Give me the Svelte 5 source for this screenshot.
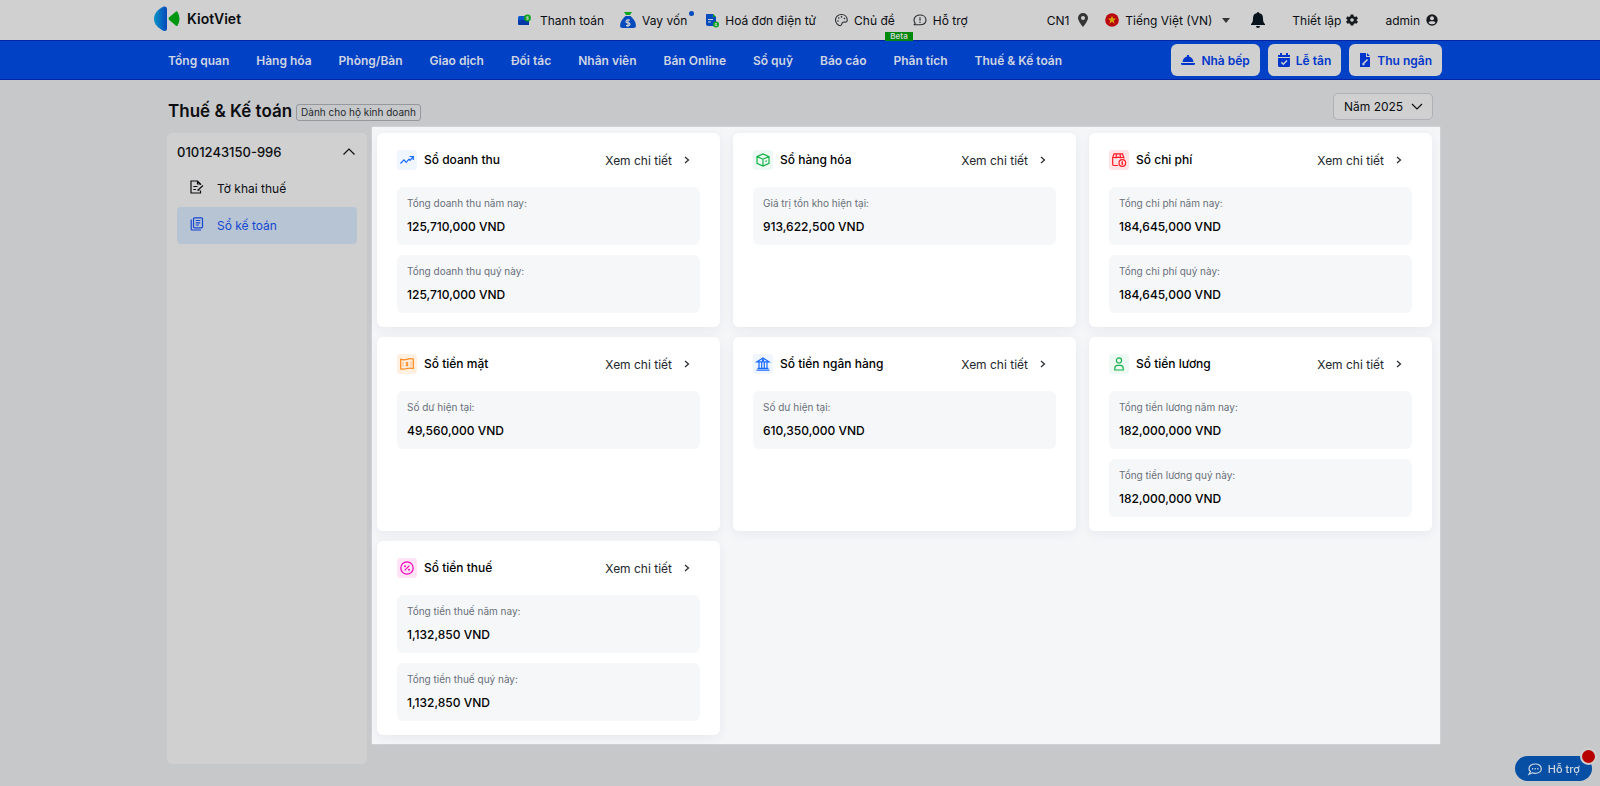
<script lang="ts">
  const menu = [
    'Tổng quan',
    'Hàng hóa',
    'Phòng/Bàn',
    'Giao dịch',
    'Đối tác',
    'Nhân viên',
    'Bán Online',
    'Sổ quỹ',
    'Báo cáo',
    'Phân tích',
    'Thuế & Kế toán',
  ];

  const books = [
    {
      icon: 'revenue',
      title: 'Sổ doanh thu',
      items: [
        { label: 'Tổng doanh thu năm nay:', value: '125,710,000 VND' },
        { label: 'Tổng doanh thu quý này:', value: '125,710,000 VND' },
      ],
    },
    {
      icon: 'goods',
      title: 'Sổ hàng hóa',
      items: [{ label: 'Giá trị tồn kho hiện tại:', value: '913,622,500 VND' }],
    },
    {
      icon: 'cost',
      title: 'Sổ chi phí',
      items: [
        { label: 'Tổng chi phí năm nay:', value: '184,645,000 VND' },
        { label: 'Tổng chi phí quý này:', value: '184,645,000 VND' },
      ],
    },
    {
      icon: 'cash',
      title: 'Sổ tiền mặt',
      items: [{ label: 'Số dư hiện tại:', value: '49,560,000 VND' }],
    },
    {
      icon: 'bank',
      title: 'Sổ tiền ngân hàng',
      items: [{ label: 'Số dư hiện tại:', value: '610,350,000 VND' }],
    },
    {
      icon: 'salary',
      title: 'Sổ tiền lương',
      items: [
        { label: 'Tổng tiền lương năm nay:', value: '182,000,000 VND' },
        { label: 'Tổng tiền lương quý này:', value: '182,000,000 VND' },
      ],
    },
    {
      icon: 'tax',
      title: 'Sổ tiền thuế',
      items: [
        { label: 'Tổng tiền thuế năm nay:', value: '1,132,850 VND' },
        { label: 'Tổng tiền thuế quý này:', value: '1,132,850 VND' },
      ],
    },
  ];

  let year = $state('2025');
  let open = $state(true);
</script>

{#snippet bookIcon(name: string)}
  <svg class="line" viewBox="0 0 14 14" width="14" height="14" aria-hidden="true">
    {#if name === 'revenue'}
      <path d="M.5 10.500L4 6.800L6.200 9.300L9 6.200L10 7.300L13.300 3.500M9.500 3.500H13.300V7" />
    {:else if name === 'goods'}
      <path d="M1 3.600L7 1L13 3.600V10.400L7 13L1 10.400ZM1 3.600L7 6.200L13 3.600M7 6.200V13M9.300 8.500L11 7.800" />
    {:else if name === 'cost'}
      <path d="M6 12.500H2A1.300 1.300 0 0 1 .7 11.200V4.500L2 .8H10.500L11.800 4.500V5.500M.7 4.500H3.500M9 4.500H11.800M4.500 .8L4 4.800L6.200 4.200L8.500 4.800L8 .8" />
      <circle cx="10.300" cy="10" r="3.300" />
      <path d="M10.300 8V12M11 9.200H9.800V10.200H10.900V11.200H9.600" stroke-width=".8" />
    {:else if name === 'cash'}
      <path d="M.7 2.300Q4 3.300 7 2.300T13.300 2V11.500Q10 10.800 7 11.500T.7 12Z" />
      <path d="M3 4.700V9.700M11 4.200V9.200" stroke-width=".5" />
      <path d="M8.300 5.700H6.200V7.100H7.900V8.600H5.700M7 4.800V9.500" stroke-width=".9" />
    {:else if name === 'bank'}
      <path d="M1 4.800L7 1L13 4.800ZM1.500 11.300H12.500M.5 13.200H13.500M3 5V11M5.700 5V11M8.300 5V11M11 5V11" />
      <circle cx="7" cy="3.200" r=".6" />
    {:else if name === 'salary'}
      <circle cx="7" cy="3.400" r="2.600" />
      <path d="M2.800 13V11.300Q2.800 8.400 5.700 8.400H8.300Q11.200 8.400 11.200 11.300V13Z" />
    {:else}
      <circle cx="7" cy="7" r="6.200" />
      <path d="M4.700 9.300L9.300 4.700" />
      <circle cx="5" cy="5.200" r=".4" />
      <circle cx="9" cy="8.800" r=".4" />
    {/if}
  </svg>
{/snippet}

<div class="page">
  <header class="topbar">
    <a class="logo" href="#home">
      <svg viewBox="0 0 26 26" width="26" height="26" aria-hidden="true">
        <defs>
          <linearGradient id="logo-blue" x1="0" x2="1" y1="0" y2="0">
            <stop offset="0" stop-color="#0793c6" />
            <stop offset="1" stop-color="#0748bb" />
          </linearGradient>
        </defs>
        <path d="M10 .5Q13 0 13 3V22.500Q13 25.500 10 25C4 22 0 18 0 12.700S4 3 10 .5Z" fill="url(#logo-blue)" />
        <path d="M15.200 11.200L22 5.500Q23 5 23.600 6Q27.200 12.500 23.800 19.300Q23 20.400 22 19.700L15.200 14Q13.800 12.600 15.200 11.200Z" fill="#009710" />
      </svg>
      <span>KiotViet</span>
    </a>

    <nav class="links">
      <a href="#payment">
        <svg viewBox="0 0 16 16" width="16" height="16" aria-hidden="true">
          <rect y="4" width="11" height="9" rx="1.500" fill="#0758ca" />
          <path d="M0 8Q5 9 11 6V13H1.500Q0 13 0 11.500Z" fill="#0637a8" />
          <circle cx="9.500" cy="6" r="3.400" fill="#08a51d" />
          <path d="M10.500 4.800H8.800V6H10.200V7.300H8.400" fill="none" stroke="#d0d0d0" />
        </svg>
        Thanh toán
      </a>
      <a class="loan" href="#loan">
        <svg viewBox="0 0 16 16" width="16" height="16" aria-hidden="true">
          <path d="M4 0H12L10 3H6Z" fill="#08a51d" />
          <path d="M5.500 4H10.500Q16 9 15.900 13.500Q16 16 13.500 16H2.500Q0 16 .1 13.500Q0 9 5.500 4Z" fill="#064bbd" />
          <path d="M10 8H7.800Q6 8 6 9.400T8 10.800T10 12.200T8 13.600H6M8 7V15" fill="none" stroke="#d0d0d0" stroke-width="1.200" />
        </svg>
        Vay vốn
      </a>
      <a href="#invoice">
        <svg viewBox="0 0 16 16" width="16" height="16" aria-hidden="true">
          <path d="M3.500 2H10L13 5V14H5Q3 14 3 12V3Q3 2 3.500 2Z" fill="#064bbd" />
          <path d="M10 2L13 5H10Z" fill="#08a51d" />
          <path d="M5 7.500H10M5 10H8" stroke="#d0d0d0" stroke-width="1.200" />
          <circle cx="13" cy="12.500" r="3" fill="#08a51d" />
          <path d="M14 11.500H12.200V13.500H14V12.800H13.200" fill="none" stroke="#d0d0d0" stroke-width=".8" />
        </svg>
        Hoá đơn điện tử
      </a>
      <a class="theme" href="#theme">
        <svg viewBox="0 0 16 16" width="16" height="16" aria-hidden="true" fill="none" stroke="#272c31" stroke-width="1.100">
          <path d="M9.500 2.500C5.900 2.500 3.500 5 3.500 8S6 13.700 8.200 13.700C10.500 13.700 9.200 10.800 11 10.200C12.800 9.700 15.200 11 15.200 8.200C15.200 5 13 2.500 9.500 2.500Z" />
          <g fill="#272c31" stroke="none">
            <circle cx="6" cy="9" r=".8" /><circle cx="6.800" cy="6" r=".8" />
            <circle cx="9.500" cy="4.900" r=".8" /><circle cx="12.400" cy="6.500" r=".8" />
          </g>
        </svg>
        Chủ đề
        <span class="beta">Beta</span>
      </a>
      <a href="#help">
        <svg viewBox="0 0 16 16" width="16" height="16" aria-hidden="true" fill="none" stroke="#272c31" stroke-width="1.100">
          <path d="M4.200 11.300Q3 10 3 8C3 5 5.700 3 9 3S15 5 15 8S12.300 12.700 9 12.700H2.800Q4.200 12.200 4.200 11.300Z" />
          <path d="M9 5.300V8.700M9 9.800V11" />
        </svg>
        Hỗ trợ
      </a>
    </nav>

    <div class="account">
      <button class="branch">
        CN1
        <svg viewBox="0 0 10 14" width="10" height="14" aria-hidden="true">
          <path d="M5 0A5 5 0 0 0 0 5C0 7.500 3 11.500 5 14C7 11.500 10 7.500 10 5A5 5 0 0 0 5 0ZM5 3A2 2 0 1 1 5 7A2 2 0 1 1 5 3Z" fill="#353535" />
        </svg>
      </button>
      <button class="lang">
        <svg viewBox="0 0 14 14" width="14" height="14" aria-hidden="true">
          <circle cx="7" cy="7" r="6.800" fill="#b9060b" />
          <path d="M7 2.600L8.100 5.600H11.200L8.700 7.500L9.700 10.700L7 8.800L4.300 10.700L5.300 7.500L2.800 5.600H5.900Z" fill="#d6a600" />
        </svg>
        Tiếng Việt (VN)
        <svg class="caret" viewBox="0 0 8 5" width="8" height="5" aria-hidden="true">
          <path d="M0 0H8L4 5Z" fill="#353535" />
        </svg>
      </button>
      <button class="bell" aria-label="Thông báo">
        <svg viewBox="0 0 14 16" width="14" height="16" aria-hidden="true">
          <path d="M6 1Q6 0 7 0T8 1C11 1.500 12 3.600 12 6.500C12 10 12.800 10.800 14 12V13H0V12C1.200 10.800 2 10 2 6.500C2 3.600 3 1.500 6 1ZM5 14H9Q9 16 7 16T5 14Z" fill="#07131d" />
        </svg>
      </button>
      <button class="settings">
        Thiết lập
        <svg viewBox="0 0 12 12" width="12" height="12" aria-hidden="true">
          <path d="M4.600 .5H7.400L7.700 2.200L9 2.900L10.600 2.300L12 4.700L10.600 5.800V6.600L12 7.500L10.600 9.800L9 9.200L7.700 10L7.400 11.500H4.600L4.300 10L3 9.200L1.400 9.800L0 7.500L1.400 6.400V5.600L0 4.700L1.400 2.300L3 2.900L4.300 2.200ZM6 4.200A1.800 1.800 0 1 0 6 7.800A1.800 1.800 0 1 0 6 4.200Z" fill="#171b20" />
        </svg>
      </button>
      <button class="user">
        admin
        <svg viewBox="0 0 12 12" width="12" height="12" aria-hidden="true">
          <circle cx="6" cy="6" r="5.700" fill="#171b20" />
          <circle cx="6" cy="4.300" r="2" fill="#d0d0d0" />
          <path d="M2.500 9Q3 7.200 4.500 7.200H7.500Q9 7.200 9.500 9Q8 10.300 6 10.300T2.500 9Z" fill="#d0d0d0" />
        </svg>
      </button>
    </div>
  </header>

  <div class="navbar">
    <nav class="menu">
      {#each menu as item (item)}
        <a href="#menu">{item}</a>
      {/each}
    </nav>
    <div class="actions">
      <button>
        <svg viewBox="0 0 14 14" width="14" height="14" aria-hidden="true">
          <path d="M6 2H8V3.500Q12 4.500 12.500 9H1.500Q2 4.500 6 3.500ZM0 10H14V10.700Q14 12 12.500 12H1.500Q0 12 0 10.700Z" />
        </svg>
        Nhà bếp
      </button>
      <button>
        <svg viewBox="0 0 12 14" width="12" height="14" aria-hidden="true">
          <path d="M2 0H4V2H8V0H10V2H12V4H0V2H2ZM0 5H12V12.500Q12 14 10.500 14H1.500Q0 14 0 12.500Z" />
          <path d="M3.300 9.300L5.300 11.300L9 7.500" fill="none" stroke="#d0d0d0" stroke-width="1.500" />
        </svg>
        Lễ tân
      </button>
      <button>
        <svg viewBox="0 0 12 14" width="12" height="14" aria-hidden="true">
          <path d="M1 0H7V4H11V14H1ZM8 0L11 3H8Z" />
          <path d="M3.500 11.500L8.500 6.500M3.500 11.500H5.500" fill="none" stroke="#d0d0d0" stroke-width="1.600" />
        </svg>
        Thu ngân
      </button>
    </div>
  </div>

  <div class="heading">
    <h1>Thuế & Kế toán</h1>
    <span class="tag">Dành cho hộ kinh doanh</span>
    <div class="year">
      <select bind:value={year} aria-label="Năm">
        <option value="2025">Năm 2025</option>
        <option value="2024">Năm 2024</option>
      </select>
      <svg class="line" viewBox="0 0 12 7" width="12" height="7" aria-hidden="true">
        <path d="M1 1L6 6L11 1" />
      </svg>
    </div>
  </div>

  <main>
    <aside>
      <button class="company" onclick={() => (open = !open)}>
        0101243150-996
        <svg class="line" viewBox="0 0 12 7" width="12" height="7" aria-hidden="true">
          <path d="M.5 6.500L6 1L11.500 6.500" />
        </svg>
      </button>
      {#if open}
        <a href="#declaration">
          <svg class="line" viewBox="0 0 14 14" width="14" height="14" aria-hidden="true">
            <path d="M10.500 10.500V13H1V1H7.500L10.500 4V5M7.500 1V4H10.500M3.300 6.500H7.500M3.300 9.500H6M7.500 10.500L13 5.500M7.500 10.500L9.500 10" />
          </svg>
          Tờ khai thuế
        </a>
        <a class="active" href="#books">
          <svg class="line" viewBox="0 0 14 14" width="14" height="14" aria-hidden="true">
            <path d="M4.500 .8H11.500Q12.500 .8 12.500 1.800V9.800Q12.500 10.800 11.500 10.800H4.500Q3.500 10.800 3.500 9.800V1.800Q3.500 .8 4.500 .8ZM1.200 2.500V12Q1.200 13 2.200 13H11M5.700 3.500H10.300M5.700 5.800H10.300M5.700 8H9" />
          </svg>
          Sổ kế toán
        </a>
      {/if}
    </aside>

    <section class="books">
      {#each books as book (book.title)}
        <article>
          <div class="card-head">
            <span class="badge {book.icon}">{@render bookIcon(book.icon)}</span>
            <h2>{book.title}</h2>
            <a href="#detail">
              Xem chi tiết
              <svg class="line" viewBox="0 0 6 8" width="6" height="8" aria-hidden="true">
                <path d="M1 1L4.500 4L1 7" />
              </svg>
            </a>
          </div>
          {#each book.items as item (item.label)}
            <div class="amount">
              <span>{item.label}</span>
              <strong>{item.value}</strong>
            </div>
          {/each}
        </article>
      {/each}
    </section>
  </main>

  <button class="support">
    <svg class="line" viewBox="0 0 14 12" width="14" height="12" aria-hidden="true">
      <path d="M2.500 8.500Q1 7.500 1 5.700C1 3 3.600 1 7.200 1S13.300 3 13.300 5.700S10.700 10.300 7.200 10.300Q5.500 10.300 4.500 9.800L1 11.200Z" />
      <path d="M4 5.700H5.200M6.600 5.700H7.800M9.200 5.700H10.400" stroke-width="1.500" />
    </svg>
    Hỗ trợ
    <span class="dot"></span>
  </button>
</div>

<style>
  :global(body) {
    margin: 0;
    background-color: #c7c8ca;
  }

  .page {
    display: flex;
    flex-direction: column;
    min-height: 100vh;
    box-sizing: border-box;
    padding-bottom: 22px;
    font-family: Inter, 'Noto Sans', sans-serif;
    font-size: 12px;
    color: #0b0d10;
  }

  a {
    color: inherit;
    text-decoration: none;
  }

  button,
  select {
    font: inherit;
    color: inherit;
    background: none;
    border: none;
    padding: 0;
    cursor: pointer;
  }

  svg {
    flex: none;
    overflow: visible;
  }

  .line {
    fill: none;
    stroke: currentColor;
    stroke-width: 1.2;
  }

  .topbar {
    display: flex;
    align-items: center;
    height: 40px;
    padding: 0 162px 0 154px;
    background-color: #d0d0d0;
  }

  .logo {
    display: flex;
    align-items: center;
    gap: 7px;
    width: 364px;
    height: 37px;
    align-self: flex-start;
    font-size: 14px;
    font-weight: 600;
  }

  .links,
  .account {
    display: flex;
    align-items: center;
    gap: 16px;
  }

  .links a,
  .account button {
    display: flex;
    align-items: center;
    gap: 6px;
    white-space: nowrap;
  }

  .links .loan,
  .links .theme {
    position: relative;
  }

  .loan::after {
    content: '';
    position: absolute;
    top: -1px;
    right: -7px;
    width: 5px;
    height: 5px;
    border-radius: 50%;
    background-color: #064bbd;
  }

  .beta {
    position: absolute;
    right: -18px;
    bottom: -13px;
    padding: 0 5px;
    background-color: #008a0d;
    color: #d0d0d0;
    font-size: 8px;
    font-weight: 600;
    line-height: 9px;
  }

  .account {
    gap: 17px;
    margin-left: auto;
  }

  .account .branch {
    gap: 9px;
  }

  .account .caret {
    margin-left: 4px;
  }

  .account .bell {
    margin: 0 10px 0 4px;
  }

  .account .settings {
    gap: 5px;
    margin-right: 10px;
  }

  .navbar {
    display: flex;
    align-items: center;
    justify-content: space-between;
    height: 40px;
    box-sizing: border-box;
    padding: 0 158px 0 168px;
    border-top: 1px solid #0023a4;
    border-bottom: 1px solid #0023a4;
    background-color: #0041c6;
  }

  .menu {
    display: flex;
    gap: 27px;
    color: #d0d5e2;
    font-weight: 600;
    white-space: nowrap;
  }

  .actions {
    display: flex;
    gap: 8px;
  }

  .actions button {
    display: flex;
    align-items: center;
    gap: 6px;
    height: 32px;
    padding: 0 10px;
    border-radius: 6px;
    background-color: #d0d0d0;
    color: #0036cb;
    font-weight: 600;
    white-space: nowrap;
  }

  .actions svg {
    fill: currentColor;
  }

  .heading {
    display: flex;
    align-items: center;
    gap: 4px;
    height: 47px;
    box-sizing: border-box;
    padding: 15px 167px 0 168px;
  }

  h1 {
    margin: 0;
    font-size: 17px;
    font-weight: 600;
    line-height: 30px;
  }

  .tag {
    margin-top: 2px;
    padding: 0 4px;
    border: 1px solid #95989c;
    border-radius: 3px;
    color: #24282d;
    font-size: 10px;
    line-height: 15px;
  }

  .year {
    display: flex;
    align-items: center;
    align-self: flex-start;
    position: relative;
    margin: -2px 0 0 auto;
  }

  .year select {
    appearance: none;
    height: 27px;
    padding: 0 28px 0 10px;
    border: 1px solid #aeb1b5;
    border-radius: 5px;
    background-color: #d0d0d0;
  }

  .year svg {
    position: absolute;
    right: 10px;
    pointer-events: none;
  }

  main {
    display: flex;
    flex: 1;
    gap: 5px;
    padding: 0 160px 0 167px;
  }

  aside {
    width: 200px;
    flex: none;
    box-sizing: border-box;
    margin-top: 6px;
    padding: 0 10px;
    border-radius: 5px;
    background-color: #d0d0d0;
  }

  .company {
    display: flex;
    align-items: center;
    justify-content: space-between;
    width: 100%;
    height: 37px;
    padding-right: 2px;
    font-size: 13px;
    font-weight: 500;
  }

  aside a {
    display: flex;
    align-items: center;
    gap: 13px;
    height: 37px;
    padding-left: 13px;
    border-radius: 4px;
  }

  aside a svg {
    margin-bottom: 4px;
  }

  aside .active {
    background-color: #b6c4d4;
    color: #1546d0;
  }

  .books {
    display: grid;
    flex: 1;
    grid-template-columns: repeat(3, 1fr);
    align-self: flex-start;
    gap: 10px 13px;
    padding: 6px 8px 9px 5px;
    background-color: #f5f6f8;
    box-shadow: 0 0 2px #e3e5e8;
  }

  article {
    display: flex;
    flex-direction: column;
    gap: 10px;
    padding: 17px 20px 14px;
    border-radius: 6px;
    background-color: #fff;
    box-shadow: 0 3px 12px rgba(30, 40, 60, 0.06);
  }

  .card-head {
    display: flex;
    align-items: center;
    margin-bottom: 7px;
  }

  .badge {
    display: flex;
    align-items: center;
    justify-content: center;
    width: 20px;
    height: 20px;
    border-radius: 3px;
  }

  .revenue,
  .bank {
    background-color: #f0f6ff;
    color: #1769ff;
  }

  .goods,
  .salary {
    background-color: #eff9f3;
    color: #12b24a;
  }

  .cost {
    background-color: #ffe3e5;
    color: #ff1925;
  }

  .cash {
    background-color: #fff0e2;
    color: #ff8616;
  }

  .tax {
    background-color: #ffe4f7;
    color: #f500b8;
  }

  h2 {
    margin: 0 auto 0 7px;
    font-size: 12px;
    font-weight: 500;
    line-height: 20px;
    color: #000;
  }

  .card-head a {
    display: flex;
    align-items: center;
    gap: 12px;
    margin-right: 10px;
    color: #23272d;
  }

  .amount {
    display: flex;
    flex-direction: column;
    gap: 7px;
    padding: 8px 10px 10px;
    border-radius: 6px;
    background-color: #f6f7f9;
  }

  .amount span {
    color: #687078;
    font-size: 10px;
    line-height: 17px;
  }

  .amount strong {
    font-size: 12px;
    font-weight: 500;
    line-height: 16px;
    color: #000;
  }

  .support {
    display: flex;
    align-items: center;
    gap: 6px;
    position: fixed;
    right: 8px;
    bottom: 5px;
    height: 25px;
    padding: 0 12px 0 13px;
    border-radius: 13px;
    background-color: #064fa4;
    color: #d0d7e2;
    font-size: 11px;
    font-weight: 500;
  }

  .dot {
    position: absolute;
    top: -8px;
    right: -5px;
    width: 13px;
    height: 13px;
    border: 2px solid #d0d0d0;
    border-radius: 50%;
    background-color: #b70000;
  }
</style>
